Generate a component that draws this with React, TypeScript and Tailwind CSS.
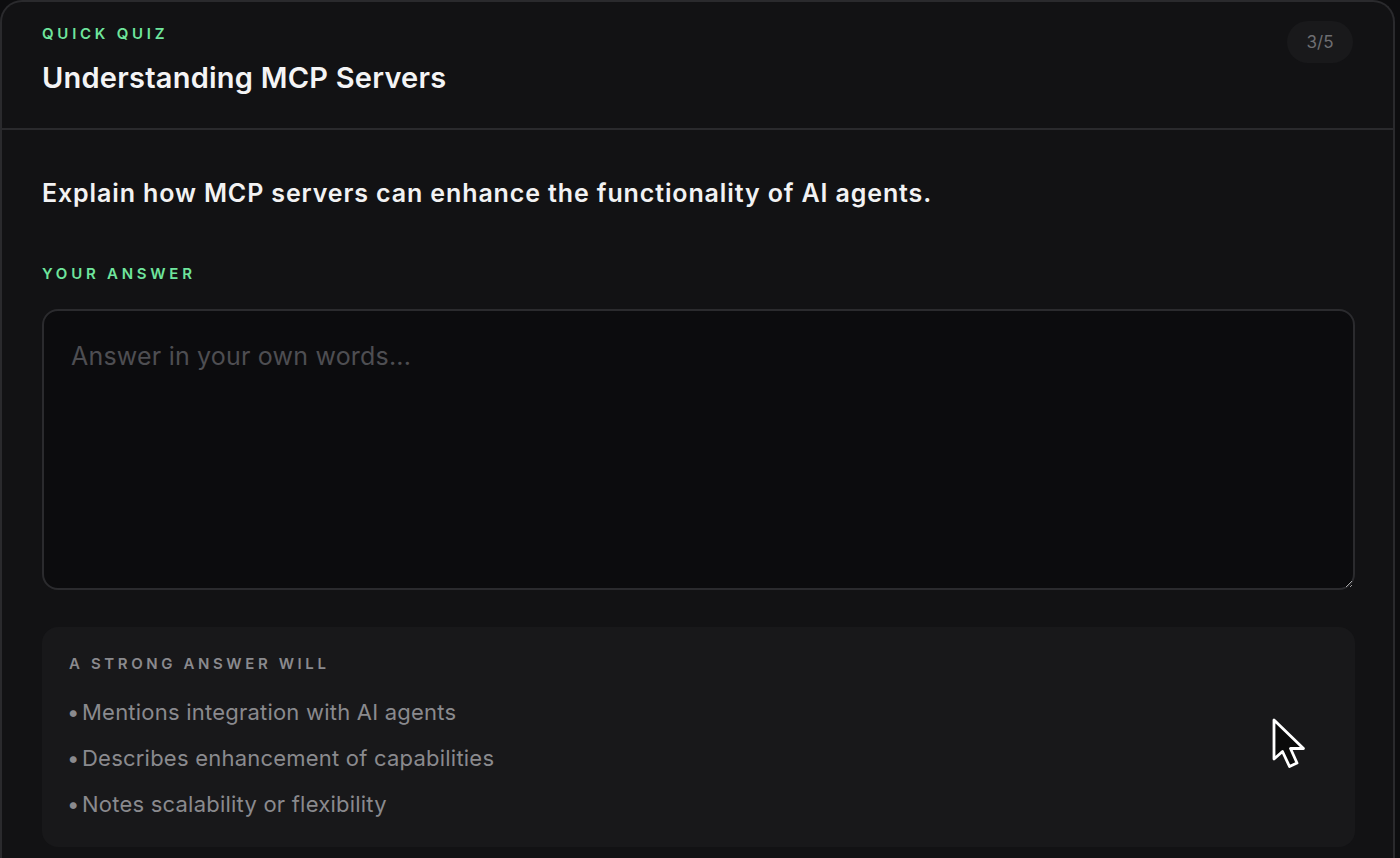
import React from "react";

function Item({ children }: { children: React.ReactNode }) {
  return (
    <li className="flex">
      <span className="-ml-[2px] inline-block w-[15px]">•</span>
      <span>{children}</span>
    </li>
  );
}

export default function App() {
  return (
    <div
      className="min-h-screen w-full bg-[#0d0d0f] pr-[5px]"
      style={{ fontFamily: "Inter, 'Noto Sans', sans-serif" }}
    >
      <div className="relative min-h-[900px] w-full rounded-t-[22px] border-2 border-b-0 border-[#2a2a2d] bg-[#121214]">
        {/* Header */}
        <div className="flex items-start justify-between border-b-2 border-[#2a2a2d] pl-[40px] pr-[40px] pt-[19px] pb-[32px]">
          <div className="flex flex-col pt-[3px]">
            <div className="text-[15px] font-semibold uppercase leading-[20px] tracking-[0.25em] text-[#6fe59d]">
              Quick Quiz
            </div>
            <div className="mt-[16px] text-[29px] font-semibold leading-[36px] tracking-[0.008em] text-[#f4f4f5]">
              Understanding MCP Servers
            </div>
          </div>
          <div className="flex h-[42px] w-[66px] items-center justify-center rounded-full bg-[#19191b] text-[17px] leading-none text-[#6e6e72]">
            3/5
          </div>
        </div>

        {/* Body */}
        <div className="flex flex-col pl-[40px] pr-[38px] pt-[47px]">
          <div className="text-[25px] font-semibold leading-[32px] tracking-[0.035em] text-[#f2f2f3]">
            Explain how MCP servers can enhance the functionality of AI agents.
          </div>

          <div className="mt-[55px] text-[15px] font-semibold uppercase leading-[20px] tracking-[0.25em] text-[#6fe59d]">
            Your Answer
          </div>

          <textarea
            placeholder="Answer in your own words..."
            className="mt-[25px] h-[281px] w-full resize-y rounded-[16px] border-2 border-[#2b2b2e] bg-[#0c0c0e] px-[27px] py-[27px] text-[25px] leading-[36px] tracking-[0.008em] text-[#e5e5e5] outline-none [color-scheme:dark] placeholder:text-[#4e4e52]"
            style={{ fontFamily: "Inter, 'Noto Sans', sans-serif" }}
          />

          <div className="relative mt-[37px] rounded-[16px] bg-[#18181a] pl-[27px] pr-[27px] pt-[25px] pb-[28px]">
            <div className="text-[15px] font-semibold uppercase leading-[24px] tracking-[0.24em] text-[#8a8a8e]">
              A strong answer will
            </div>
            <ul className="mt-[21px] flex flex-col gap-[16px] text-[22px] leading-[30px] tracking-[0.01em] text-[#8a8a8e]">
              <Item>Mentions integration with AI agents</Item>
              <Item>Describes enhancement of capabilities</Item>
              <Item>Notes scalability or flexibility</Item>
            </ul>

            {/* mouse cursor overlay */}
            <svg
              className="absolute left-[1228px] top-[89px]"
              width="42"
              height="58"
              viewBox="0 0 42 58"
            >
              <path
                d="M4 4 L4 43 L12.5 35.5 L19.5 50.5 L27 47 L20.5 32.5 L33.5 32.5 Z"
                fill="#0a0a0a"
                stroke="#ffffff"
                strokeWidth="2.8"
                strokeLinejoin="round"
              />
            </svg>
          </div>
        </div>
      </div>
    </div>
  );
}
